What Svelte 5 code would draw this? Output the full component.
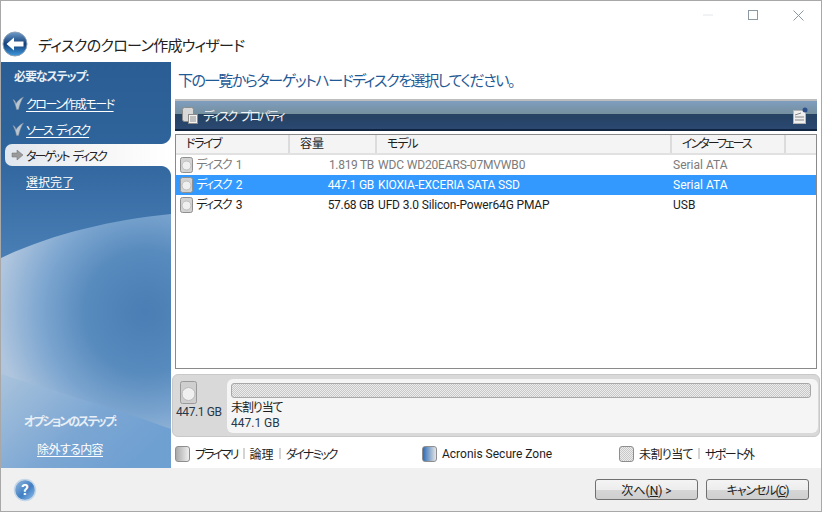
<script>
	const required = [
		{ label: "クローン作成モード", state: "done", fit: "k15" },
		{ label: "ソース ディスク", state: "done", fit: "k2" },
		{ label: "ターゲット ディスク", state: "active", fit: "k2" },
		{ label: "選択完了", state: "todo", fit: "" }
	];

	const columns = [
		{ label: "ドライブ", width: 114, fit: "k15" },
		{ label: "容量", width: 87, fit: "" },
		{ label: "モデル", width: 295, fit: "k1" },
		{ label: "インターフェース", width: 114, fit: "k2" },
		{ label: "", width: 31, fit: "" }
	];

	const disks = [
		{ name: "ディスク 1", size: "1.819 TB", model: "WDC WD20EARS-07MVWB0", bus: "Serial ATA", kind: "off" },
		{ name: "ディスク 2", size: "447.1 GB", model: "KIOXIA-EXCERIA SATA SSD", bus: "Serial ATA", kind: "selected" },
		{ name: "ディスク 3", size: "57.68 GB", model: "UFD 3.0 Silicon-Power64G PMAP", bus: "USB", kind: "" }
	];
</script>

{#snippet diskIcon()}
	<svg class="disk-icon" width="13" height="16" viewBox="0 0 13 16">
		<rect x="0.5" y="0.5" width="12" height="15" rx="2" fill="#d2d2d2" stroke="#8f8f8f" />
		<circle cx="6.5" cy="8.500" r="4.500" fill="#efefef" stroke="#bdbdbd" />
	</svg>
{/snippet}

<div class="window">
	<div class="caption">
		<svg width="10" height="10" viewBox="0 0 10 10"><path d="M0 5h10" stroke="#e3e6e9" /></svg>
		<svg width="10" height="10" viewBox="0 0 10 10"><rect x="0.5" y="0.5" width="9" height="9" fill="none" stroke="#8d98a5" /></svg>
		<svg width="11" height="11" viewBox="0 0 11 11"><path d="M.5.5l10 10M10.5.5l-10 10" stroke="#8d98a5" fill="none" /></svg>
	</div>

	<div class="title-row">
		<svg width="26" height="26" viewBox="0 0 26 26">
			<defs>
				<linearGradient id="back" x1="0" y1="0" x2="0" y2="1">
					<stop offset="0" stop-color="#6f9cc9" />
					<stop offset="0.5" stop-color="#123f78" />
					<stop offset="1" stop-color="#3f9be0" />
				</linearGradient>
			</defs>
			<circle cx="13" cy="13" r="12" fill="url(#back)" stroke="#8ba0b5" />
			<path d="M4.5 13l7.5-6.5v4h9.5v5H12v4z" fill="#fff" />
		</svg>
		<h1>ディスクのクローン作成ウィザード</h1>
	</div>

	<div class="body">
		<nav class="sidebar">
			<svg class="swoosh" width="170" height="406" viewBox="0 0 170 406">
				<defs>
					<radialGradient id="wave" gradientUnits="userSpaceOnUse" cx="145" cy="250" r="150">
						<stop offset="0" stop-color="#4a7eb4" />
						<stop offset="0.4" stop-color="#578abd" />
						<stop offset="0.7" stop-color="#7da6d0" />
						<stop offset="1" stop-color="#b0c6de" />
					</radialGradient>
					<linearGradient id="foot" x1="0" y1="0" x2="1" y2="0.6">
						<stop offset="0" stop-color="#a9c3dc" />
						<stop offset="0.6" stop-color="#7ba6d3" />
						<stop offset="1" stop-color="#6fa0d2" />
					</linearGradient>
				</defs>
				<path d="M0 196C50 172 110 158 170 152V406H0z" fill="url(#wave)" />
				<path d="M0 312C40 325 110 345 170 367V406H0z" fill="url(#foot)" />
			</svg>
			<div class="step-head k1">必要なステップ:</div>
			<ul>
				{#each required as step}
					<li class={step.state}>
						<span class="mark">
							{#if step.state === "done"}
								<svg width="12" height="14" viewBox="0 0 12 14"><path d="M1 3.500c1.400.4 2.400 1.600 3 4C5.500 5 8 2.500 11.500 1 9 4.500 7.500 9 6.500 13.500h-2C4 10 2.500 6.500 1 3.500z" fill="#b9c5d0" stroke="#7d8b99" stroke-width="0.5" /></svg>
							{:else if step.state === "active"}
								<svg width="13" height="12" viewBox="0 0 13 12"><path d="M1 4h5V1l6 5-6 5V8H1z" fill="#9a9a9a" stroke="#6e6e6e" stroke-width="0.5" /></svg>
							{/if}
						</span>
						<span class="step-label {step.fit}">{step.label}</span>
					</li>
				{/each}
			</ul>
			<div class="optional">
				<div class="step-head k2">オプションのステップ:</div>
				<span class="step-label k05">除外する内容</span>
			</div>
		</nav>

		<main class="content">
			<h2>下の一覧からターゲットハードディスクを選択してください。</h2>
			<div class="banner">
				<svg width="16" height="17" viewBox="0 0 16 17">
					<rect x="0.5" y="0.5" width="11" height="14" rx="2" fill="#d8d8d8" stroke="#8c8c8c" />
					<rect x="6.5" y="7.5" width="9" height="9" fill="#f3f3f3" stroke="#8c8c8c" />
					<path d="M8 10h6M8 12h6M8 14h6" stroke="#8c8c8c" />
				</svg>
				<span class="k2">ディスク プロパティ</span>
				<svg class="banner-end" width="15" height="17" viewBox="0 0 15 17">
					<rect x="0.5" y="3.500" width="12" height="13" fill="#f0f0f0" stroke="#b5b5b5" />
					<path d="M2 8l6-2M2 10h9M2 13h9" stroke="#888" />
					<circle cx="12" cy="3" r="2.500" fill="#2b4f8c" />
				</svg>
			</div>

			<div class="table">
				<div class="thead">
					{#each columns as col}
						<div class="th {col.fit}" style="width: {col.width}px">{col.label}</div>
					{/each}
				</div>
				{#each disks as disk}
					<div class="tr {disk.kind}">
						<div class="td drive">{@render diskIcon()}<span class="k15">{disk.name}</span></div>
						<div class="td size">{disk.size}</div>
						<div class="td model">{disk.model}</div>
						<div class="td bus">{disk.bus}</div>
					</div>
				{/each}
			</div>

			<div class="map">
				<div class="map-disk">
					<svg width="17" height="23" viewBox="0 0 17 23">
						<rect x="0.5" y="0.5" width="16" height="22" rx="2" fill="#cfcfcf" stroke="#9a9a9a" />
						<circle cx="8.5" cy="13" r="6.5" fill="#f0f0f0" stroke="#bbb" />
					</svg>
					<span>447.1 GB</span>
				</div>
				<div class="map-part">
					<div class="checker bar"></div>
					<div class="part-name k1">未割り当て</div>
					<div class="part-size">447.1 GB</div>
				</div>
			</div>

			<div class="legend">
				<div class="legend-item primary">
					<i class="swatch grey"></i>
					<span class="k2">プライマリ</span><b></b><span>論理</span><b></b><span class="k2">ダイナミック</span>
				</div>
				<div class="legend-item acronis">
					<i class="swatch blue"></i>
					<span>Acronis Secure Zone</span>
				</div>
				<div class="legend-item">
					<i class="swatch checker"></i>
					<span class="k05">未割り当て</span><b></b><span class="k15">サポート外</span>
				</div>
			</div>
		</main>
	</div>

	<footer>
		<svg width="24" height="24" viewBox="0 0 24 24">
			<defs>
				<linearGradient id="help" x1="0" y1="0" x2="1" y2="1">
					<stop offset="0" stop-color="#9bbbdc" />
					<stop offset="0.55" stop-color="#3f7fc4" />
					<stop offset="1" stop-color="#9cc6ee" />
				</linearGradient>
			</defs>
			<circle cx="12" cy="12" r="10.5" fill="url(#help)" stroke="#c4d6e8" stroke-width="1.5" />
			<text x="12" y="17" text-anchor="middle" class="help-mark">?</text>
		</svg>
		<div class="buttons">
			<button>次へ(<u>N</u>) &gt;</button>
			<button class="k1">キャンセル(<u>C</u>)</button>
		</div>
	</footer>
</div>

<style>
	:global(body) {
		margin: 0;
		background: #fff;
	}

	.window {
		width: 822px;
		height: 512px;
		box-sizing: border-box;
		border: 1px solid #a8a8a8;
		display: flex;
		flex-direction: column;
		overflow: hidden;
		background: #fff;
		color: #1d1d1d;
		font-family: Roboto, "Noto Sans CJK JP", sans-serif;
		font-size: 12px;
		font-feature-settings: "palt";
	}

	.k05 {
		letter-spacing: -0.6px;
	}

	.k1 {
		letter-spacing: -1.1px;
	}

	.k15 {
		letter-spacing: -1.5px;
		word-spacing: 3px;
	}

	.k2 {
		letter-spacing: -2px;
		word-spacing: 3px;
	}

	.caption {
		height: 28px;
		display: flex;
		justify-content: flex-end;
		align-items: center;
		gap: 35px;
		padding-right: 17px;
	}

	.title-row {
		height: 33px;
		box-sizing: border-box;
		padding: 0 0 3px 1px;
		display: flex;
		align-items: center;
		gap: 10px;
	}

	h1 {
		margin: 0;
		font-size: 15px;
		letter-spacing: -0.7px;
		font-weight: 400;
		color: #222;
	}

	.body {
		flex: 1;
		display: flex;
		min-height: 0;
	}

	.sidebar {
		position: relative;
		width: 170px;
		flex: none;
		box-sizing: border-box;
		display: flex;
		flex-direction: column;
		padding: 7px 0 10px;
		color: #fff;
		background: linear-gradient(#2a5d93 0, #2f659c 90px, #4a80b6 200px);
	}

	.swoosh {
		position: absolute;
		inset: 0;
	}

	.step-head {
		position: relative;
		padding-left: 13px;
		font-weight: 700;
		line-height: 16px;
		color: #e8eff6;
	}

	ul {
		position: relative;
		list-style: none;
		margin: 5px 0 0;
		padding: 0;
	}

	li {
		position: relative;
		height: 26px;
		display: flex;
		align-items: center;
		margin-left: 4px;
		padding-left: 4px;
	}

	li.active {
		height: 22px;
		margin: 2px 0 2px 4px;
		color: #222;
		background: linear-gradient(90deg, #dfe6ee, #f4f4f4 45%, #fff);
		border-radius: 7px 0 0 7px;
	}

	li.active::before,
	li.active::after {
		content: "";
		position: absolute;
		right: 0;
		width: 10px;
		height: 10px;
	}

	li.active::before {
		top: -10px;
		background: radial-gradient(circle at 0 0, transparent 9.5px, #fff 10.5px);
	}

	li.active::after {
		bottom: -10px;
		background: radial-gradient(circle at 0 100%, transparent 9.5px, #fff 10.5px);
	}

	.mark {
		width: 17px;
		flex: none;
		display: flex;
		justify-content: center;
	}

	.step-label {
		text-decoration: underline;
		text-underline-offset: 2px;
		color: #fff;
	}

	li.active .step-label {
		text-decoration: none;
		color: #222;
	}

	.optional {
		position: relative;
		margin-top: auto;
		display: flex;
		flex-direction: column;
		gap: 12px;
	}

	.optional .step-head {
		padding-left: 23px;
	}

	.optional .step-label {
		margin-left: 36px;
		align-self: flex-start;
		line-height: 16px;
	}

	.content {
		flex: 1;
		min-width: 0;
		box-sizing: border-box;
		padding: 8px 0 0 3px;
		display: flex;
		flex-direction: column;
	}

	h2 {
		margin: 0 0 0 4px;
		height: 29px;
		font-size: 15px;
		letter-spacing: -1.4px;
		line-height: 22px;
		font-weight: 400;
		color: #1f5a96;
	}

	.banner {
		margin: 0 4px 0 1px;
		height: 32px;
		box-sizing: border-box;
		border-top: 2px solid #bdbdbd;
		border-bottom: 2px solid #10243f;
		display: flex;
		align-items: center;
		gap: 5px;
		padding-left: 7px;
		color: #f4f4f4;
		background: linear-gradient(#7f9dbf 0, #75909f 45%, #254261 46%, #2a4872 100%);
	}

	.banner-end {
		margin-left: auto;
		margin-right: 9px;
	}

	.table {
		margin: 3px 4px 0 1px;
		height: 235px;
		box-sizing: border-box;
		border: 1px solid #8a8a8a;
		background: #fff;
	}

	.thead {
		display: flex;
		height: 20px;
		box-sizing: border-box;
		border-bottom: 2px solid #e1e1e1;
		background: #f4f4f4;
	}

	.th {
		flex: none;
		box-sizing: border-box;
		padding-left: 10px;
		line-height: 19px;
		border-right: 2px solid #dcdcdc;
	}

	.th:last-child {
		border-right: 0;
	}

	.tr {
		display: flex;
		height: 20px;
		line-height: 20px;
	}

	.tr.off {
		color: #7b7b7b;
	}

	.tr.selected {
		background: #3399ff;
		color: #fff;
	}

	.drive {
		width: 113px;
		display: flex;
		align-items: center;
		gap: 3px;
		padding-left: 4px;
		box-sizing: border-box;
	}

	.size {
		width: 87px;
		text-align: right;
		box-sizing: border-box;
		padding-right: 2px;
		letter-spacing: -0.3px;
	}

	.model {
		width: 295px;
		box-sizing: border-box;
		padding-left: 2px;
		letter-spacing: -0.15px;
	}

	.bus {
		box-sizing: border-box;
		padding-left: 2px;
	}

	.map {
		margin: 5px 0 0 -2px;
		height: 63px;
		width: 648px;
		box-sizing: border-box;
		display: flex;
		border: 1px solid #c9c9c9;
		border-radius: 6px;
		background: #d9d9d9;
		padding: 4px 1px 3px 0;
	}

	.map-disk {
		width: 54px;
		flex: none;
		box-sizing: border-box;
		padding-left: 3px;
		display: flex;
		flex-direction: column;
		align-items: flex-start;
		gap: 1px;
		color: #26384a;
		letter-spacing: -0.4px;
	}

	.map-disk svg {
		margin-left: 4px;
		margin-top: 2px;
	}

	.map-part {
		flex: 1;
		background: #f5f5f5;
		border-radius: 6px;
		padding: 4px 7px 0 4px;
		line-height: 15px;
	}

	.bar {
		height: 15px;
		border: 1px solid #a8a8a8;
		border-radius: 3px;
		box-sizing: border-box;
		margin-bottom: 3px;
	}

	.checker {
		background: repeating-conic-gradient(#c8c8c8 0 25%, #ececec 0 50%) 0 0 / 2px 2px;
	}

	.part-size {
		color: #26384a;
	}

	.legend {
		display: flex;
		height: 31px;
		box-sizing: border-box;
		padding-top: 2px;
		align-items: center;
		margin-left: 1px;
	}

	.legend-item {
		display: flex;
		align-items: center;
		gap: 5px;
	}

	.primary {
		width: 247px;
		flex: none;
	}

	.acronis {
		width: 197px;
		flex: none;
	}

	.legend-item b {
		width: 2px;
		height: 11px;
		background: #d4d4d4;
	}

	.swatch {
		width: 15px;
		height: 16px;
		box-sizing: border-box;
		border: 1px solid #8e8e8e;
		border-radius: 3px;
	}

	.grey {
		background: linear-gradient(90deg, #a9a9a9, #efefef);
	}

	.blue {
		background: linear-gradient(90deg, #2f6cb5, #e5e5e5);
	}

	footer {
		height: 43px;
		flex: none;
		background: #f0f0f0;
		display: flex;
		align-items: center;
		justify-content: space-between;
		padding: 0 12px;
	}

	.buttons {
		display: flex;
		gap: 8px;
	}

	button {
		width: 103px;
		height: 21px;
		padding: 0;
		border: 1px solid #707070;
		border-radius: 3px;
		background: linear-gradient(#f4f4f4 0, #ededed 50%, #d6d6d6 51%, #cfcfcf 100%);
		font: inherit;
		color: #222;
	}

	.help-mark {
		fill: #fff;
		font-size: 15px;
		font-weight: 700;
	}
</style>
